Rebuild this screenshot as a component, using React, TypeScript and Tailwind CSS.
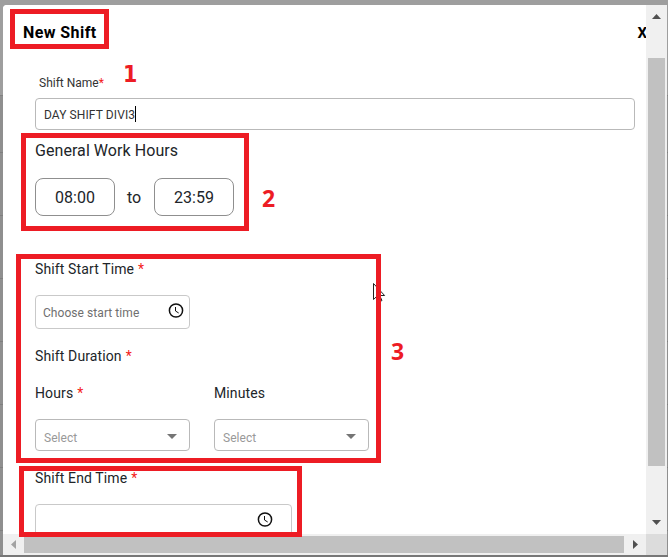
import type { ReactNode } from 'react'

function Required() {
  return <span className="text-[#f41b1b]">*</span>
}

function Label({ children, className = '' }: { children: ReactNode; className?: string }) {
  return (
    <div className={`flex h-5 items-center gap-1 whitespace-nowrap text-[14px] tracking-[0.12px] text-[#212529] ${className}`}>
      {children}
    </div>
  )
}

function ClockIcon() {
  return (
    <svg width="16" height="16" viewBox="0 0 16 16" fill="none" stroke="#111" strokeWidth="1.5">
      <circle cx="8" cy="7.5" r="6.6" />
      <path d="M7.5 4v4l3.2 2" strokeWidth="1" />
    </svg>
  )
}

function TimeBox({ value }: { value: string }) {
  return (
    <div className="flex h-[38px] w-20 items-center justify-center rounded-lg border border-[#8f8f8f] pt-0.5 text-[16px]">
      {value}
    </div>
  )
}

function Select() {
  return (
    <div className="flex h-8 w-[155px] items-center justify-between rounded border border-[#b9b9b9] pl-2 pr-3 pt-1.5 text-[12px] tracking-[0.05px] text-[#999]">
      Select
      <svg width="10" height="5" viewBox="0 0 10 5" className="mb-1">
        <path d="M0 0h10L5 5z" fill="#757575" />
      </svg>
    </div>
  )
}

function ShiftForm() {
  return (
    <div className="min-w-0 flex-1 overflow-hidden bg-white">
      <header className="flex h-[55px] items-center justify-between pl-5 text-[16px] font-bold text-black">
        <h1 className="tracking-[0.42px]">New Shift</h1>
        <button className="mr-[-1px] pt-px text-[15px]">X</button>
      </header>

      <div className="pl-8">
        <div className="mt-[13px] flex h-5 items-center pl-1 text-[12px] text-[#333]">
          Shift Name
          <Required />
        </div>
        <div className="mt-[5px] flex h-8 w-[600px] items-center rounded border border-[#b9b9b9] pl-2 pt-0.5 text-[12px] tracking-[0.1px] text-[#333]">
          DAY SHIFT DIVI3
          <span className="mb-0.5 h-4 w-px bg-black" />
        </div>

        <h2 className="mt-[11px] flex h-5 items-center text-[16px] tracking-[0.06px] text-[#212529]">General Work Hours</h2>
        <div className="mt-[17px] flex items-center gap-3 text-[16px] text-[#212529]">
          <TimeBox value="08:00" />
          <span className="w-[15px] pt-0.5">to</span>
          <TimeBox value="23:59" />
        </div>

        <Label className="mt-[43px]">
          Shift Start Time <Required />
        </Label>
        <div className="mt-4 flex h-[34px] w-[155px] items-center justify-between rounded border border-[#c9c9c9] pl-[7px] pr-[5px] pt-0.5 text-[12px] tracking-[0.06px] text-[#6f6f6f]">
          Choose start time
          <span className="mb-1">
            <ClockIcon />
          </span>
        </div>

        <Label className="mt-[17px]">
          Shift Duration <Required />
        </Label>
        <div className="mt-[17px] flex gap-6">
          <div>
            <Label className="mb-4">
              Hours <Required />
            </Label>
            <Select />
          </div>
          <div>
            <Label className="mb-4">Minutes</Label>
            <Select />
          </div>
        </div>

        <Label className="mt-[17px]">
          Shift End Time <Required />
        </Label>
        <div className="mt-4 flex h-[34px] w-[257px] items-center justify-end rounded border border-[#c9c9c9] pb-[3px] pr-[18px]">
          <ClockIcon />
        </div>
      </div>
    </div>
  )
}

function VerticalScrollbar() {
  return (
    <div className="flex w-[21px] shrink-0 flex-col items-center bg-[#f0f0f0]">
      <svg width="9" height="5" viewBox="0 0 9 5" className="mt-[9px]">
        <path d="M0 5h9L4.5 0z" fill="#505050" />
      </svg>
      <div className="mt-[39px] h-[408px] w-[17px] bg-[#c1c1c1]" />
      <svg width="9" height="5" viewBox="0 0 9 5" className="mt-[54px]">
        <path d="M0 0h9L4.5 5z" fill="#505050" />
      </svg>
    </div>
  )
}

function HorizontalScrollbar() {
  return (
    <div className="flex h-[21px] shrink-0 items-center bg-[#f0f0f0]">
      <svg width="5" height="9" viewBox="0 0 5 9" className="ml-2">
        <path d="M5 0v9L0 4.5z" fill="#a3a3a3" />
      </svg>
      <div className="ml-2 h-[17px] w-[600px] bg-[#c1c1c1]" />
      <svg width="5" height="9" viewBox="0 0 5 9" className="ml-[9px]">
        <path d="M0 0v9l5-4.5z" fill="#505050" />
      </svg>
      <div className="ml-auto h-full w-[21px] bg-[#dcdcdc]" />
    </div>
  )
}

// Tutorial markup drawn over the dialog
function Annotations() {
  return (
    <div className="pointer-events-none absolute inset-0 font-['Open_Sans',sans-serif] text-[23px] font-bold leading-6 text-[#ed1c24]">
      <svg width="13" height="20" viewBox="0 0 13 20" className="absolute left-[373px] top-[283px]">
        <path d="M.5.5v16l3.7-3.5 2.8 5.5 2-1-2.4-5h5z" fill="#fff" stroke="#222" />
      </svg>
      <div className="absolute left-[10px] top-[9px] h-10 w-[99px] border-[5px] border-[#ed1c24]" />
      <div className="absolute left-[21px] top-[133px] h-[98px] w-[228px] border-[5px] border-[#ed1c24]" />
      <div className="absolute left-[16px] top-[254px] h-[209px] w-[365px] border-[5px] border-[#ed1c24]" />
      <div className="absolute left-[19px] top-[466px] h-[71px] w-[283px] border-[5px] border-[#ed1c24]" />
      <span className="absolute left-[123px] top-[62px] font-['DejaVu_Sans_Condensed','DejaVu_Sans',sans-serif]">1</span>
      <span className="absolute left-[262px] top-[186px]">2</span>
      <span className="absolute left-[391px] top-[339px]">3</span>
    </div>
  )
}

const backdropRows = [0, 1, 2, 3, 4, 5, 6]

export default function App() {
  return (
    <div className="relative h-[557px] w-[668px] overflow-hidden bg-[#8f8f8f] font-['Roboto',sans-serif]">
      <div className="h-24 border-b border-[#828282] bg-[#9e9e9e]" />
      <div className="-mt-[6px]">
        {backdropRows.map((row) => (
          <div key={row} className="h-[63px] border-b border-[#7f7f7f]" />
        ))}
      </div>
      <div className="absolute inset-x-0 bottom-0 h-0.5 bg-[#777]" />

      <div className="absolute left-[3px] top-[5px] flex h-[550px] w-[664px] flex-col overflow-hidden rounded-tl-[4px] bg-white">
        <div className="flex min-h-0 flex-1">
          <ShiftForm />
          <VerticalScrollbar />
        </div>
        <HorizontalScrollbar />
      </div>

      <Annotations />
    </div>
  )
}
